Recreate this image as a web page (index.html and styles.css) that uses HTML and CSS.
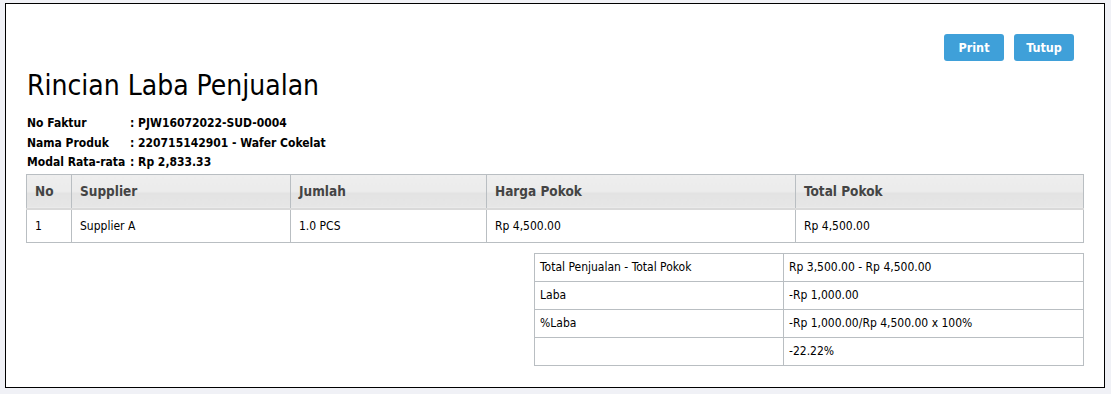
FILE: index.html
```html
<!DOCTYPE html>
<html lang="id">
<head>
    <meta charset="UTF-8">
    <title>Rincian Laba Penjualan</title>
    <link rel="stylesheet" href="styles.css">
</head>
<body>
    <div class="box">
        <div class="actions">
            <button class="btn">Print</button>
            <button class="btn">Tutup</button>
        </div>

        <h1>Rincian Laba Penjualan</h1>

        <div class="info">
            <div class="info-row"><span class="info-label">No Faktur</span><span>: PJW16072022-SUD-0004</span></div>
            <div class="info-row"><span class="info-label">Nama Produk</span><span>: 220715142901 - Wafer Cokelat</span></div>
            <div class="info-row"><span class="info-label">Modal Rata-rata</span><span>: Rp 2,833.33</span></div>
        </div>

        <table class="grid">
            <thead>
                <tr>
                    <th class="c-no">No</th>
                    <th class="c-sup">Supplier</th>
                    <th class="c-jml">Jumlah</th>
                    <th class="c-hrg">Harga Pokok</th>
                    <th>Total Pokok</th>
                </tr>
            </thead>
            <tbody>
                <tr>
                    <td>1</td>
                    <td>Supplier A</td>
                    <td>1.0 PCS</td>
                    <td>Rp 4,500.00</td>
                    <td>Rp 4,500.00</td>
                </tr>
            </tbody>
        </table>

        <table class="summary">
            <tr>
                <td class="s-label">Total Penjualan - Total Pokok</td>
                <td>Rp 3,500.00 - Rp 4,500.00</td>
            </tr>
            <tr>
                <td class="s-label">Laba</td>
                <td>-Rp 1,000.00</td>
            </tr>
            <tr>
                <td class="s-label">%Laba</td>
                <td>-Rp 1,000.00/Rp 4,500.00 x 100%</td>
            </tr>
            <tr>
                <td class="s-label"></td>
                <td>-22.22%</td>
            </tr>
        </table>
    </div>
</body>
</html>
```

FILE: styles.css
```css
body {
    font-family: "DejaVu Sans Condensed", "DejaVu Sans", sans-serif;
    font-stretch: condensed;
    background-color: #f0f1f6;
    color: #000;
    margin: 3px 6px 6px 5px;
}

.box {
    background-color: #fff;
    border: 1px solid #000;
    height: 385px;
    box-sizing: border-box;
    padding: 30px 20px 0 20px;
}

.actions {
    display: flex;
    justify-content: flex-end;
    gap: 10px;
    padding-right: 10px;
}

.btn {
    font-family: inherit;
    font-stretch: condensed;
    background-color: #3fa0d9;
    color: #fff;
    border: none;
    border-radius: 3px;
    width: 60px;
    height: 27px;
    font-size: 12.5px;
    font-weight: bold;
    cursor: pointer;
}

h1 {
    font-weight: normal;
    font-size: 28px;
    margin: 7px 0 0 1px;
    line-height: 36px;
}

.info {
    margin: 10px 0 1px 1px;
    font-size: 12px;
    font-weight: bold;
}

.info-row {
    display: flex;
    height: 19.5px;
    line-height: 19.5px;
}

.info-label {
    width: 103px;
}

table {
    border-collapse: collapse;
    font-size: 12px;
}

.grid {
    width: 1058px;
}

.grid th {
    text-align: left;
    font-size: 13.5px;
    color: #444;
    height: 33px;
    padding: 0 8px;
    background: linear-gradient(#eeeeee 0%, #ebebeb 55%, #e3e3e3 56%, #e6e6e6 100%);
    border: 1px solid #b9bec2;
    border-bottom: 2px solid #d9d9d9;
}

.grid td {
    height: 32px;
    padding: 0 8px;
    border: 1px solid #b9bec2;
}

.c-no { width: 28px; }
.c-sup { width: 202px; }
.c-jml { width: 179px; }
.c-hrg { width: 292px; }

.summary {
    width: 550px;
    margin: 10px 0 0 508px;
}

.summary td {
    height: 27px;
    padding: 0 5px;
    border: 1px solid #b9bec2;
}

.summary .s-label {
    width: 238px;
}
```
